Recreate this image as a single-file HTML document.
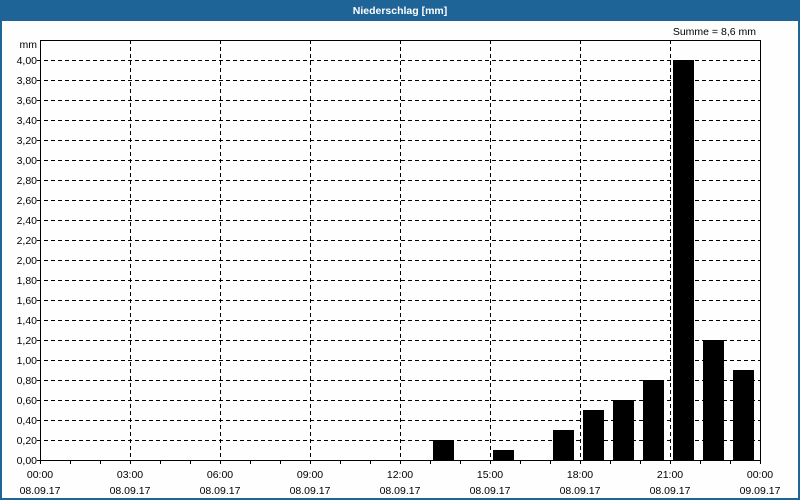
<!DOCTYPE html>
<html><head><meta charset="utf-8"><style>
html,body{margin:0;padding:0;width:800px;height:500px;overflow:hidden;background:#fff}
svg{display:block}
text{font-family:"Liberation Sans",sans-serif;font-size:10.5px;fill:#000}
</style></head><body>
<svg width="800" height="500" viewBox="0 0 800 500" xmlns="http://www.w3.org/2000/svg">
<rect x="0" y="0" width="800" height="500" fill="#1e6496"/>
<rect x="2" y="21" width="796" height="477" fill="#fdfefd"/>
<text x="400" y="14" text-anchor="middle" style="fill:#fff;font-weight:bold;font-size:10.5px">Niederschlag [mm]</text>
<text x="756" y="35" text-anchor="end">Summe = 8,6 mm</text>
<text x="37" y="48" text-anchor="end">mm</text>
<g stroke="#000" stroke-width="1" stroke-dasharray="4,3" shape-rendering="crispEdges">
<path d="M37 60.5H760M37 80.5H760M37 100.5H760M37 120.5H760M37 140.5H760M37 160.5H760M37 180.5H760M37 200.5H760M37 220.5H760M37 240.5H760M37 260.5H760M37 280.5H760M37 300.5H760M37 320.5H760M37 340.5H760M37 360.5H760M37 380.5H760M37 400.5H760M37 420.5H760M37 440.5H760"/>
<path d="M130.5 40V460M220.5 40V460M310.5 40V460M400.5 40V460M490.5 40V460M580.5 40V460M670.5 40V460"/>
</g>
<g fill="#000" shape-rendering="crispEdges">
<rect x="433" y="440" width="21" height="20"/>
<rect x="493" y="450" width="21" height="10"/>
<rect x="553" y="430" width="21" height="30"/>
<rect x="583" y="410" width="21" height="50"/>
<rect x="613" y="400" width="21" height="60"/>
<rect x="643" y="380" width="21" height="80"/>
<rect x="673" y="60" width="21" height="400"/>
<rect x="703" y="340" width="21" height="120"/>
<rect x="733" y="370" width="21" height="90"/>
</g>
<g stroke="#000" fill="none" shape-rendering="crispEdges">
<rect x="40.5" y="40.5" width="720" height="420"/>
<path d="M37 460.5H40M40.5 461V464M70.5 461V464M100.5 461V464M130.5 461V464M160.5 461V464M190.5 461V464M220.5 461V464M250.5 461V464M280.5 461V464M310.5 461V464M340.5 461V464M370.5 461V464M400.5 461V464M430.5 461V464M460.5 461V464M490.5 461V464M520.5 461V464M550.5 461V464M580.5 461V464M610.5 461V464M640.5 461V464M670.5 461V464M700.5 461V464M730.5 461V464M760.5 461V464"/>
</g>
<g text-anchor="end">
<text x="37" y="64">4,00</text><text x="37" y="84">3,80</text><text x="37" y="104">3,60</text><text x="37" y="124">3,40</text><text x="37" y="144">3,20</text><text x="37" y="164">3,00</text><text x="37" y="184">2,80</text><text x="37" y="204">2,60</text><text x="37" y="224">2,40</text><text x="37" y="244">2,20</text><text x="37" y="264">2,00</text><text x="37" y="284">1,80</text><text x="37" y="304">1,60</text><text x="37" y="324">1,40</text><text x="37" y="344">1,20</text><text x="37" y="364">1,00</text><text x="37" y="384">0,80</text><text x="37" y="404">0,60</text><text x="37" y="424">0,40</text><text x="37" y="444">0,20</text><text x="37" y="464">0,00</text>
</g>
<g text-anchor="middle">
<text x="40" y="478">00:00</text><text x="130" y="478">03:00</text><text x="220" y="478">06:00</text><text x="310" y="478">09:00</text><text x="400" y="478">12:00</text><text x="490" y="478">15:00</text><text x="580" y="478">18:00</text><text x="670" y="478">21:00</text><text x="760" y="478">00:00</text>
<text x="40" y="494">08.09.17</text><text x="130" y="494">08.09.17</text><text x="220" y="494">08.09.17</text><text x="310" y="494">08.09.17</text><text x="400" y="494">08.09.17</text><text x="490" y="494">08.09.17</text><text x="580" y="494">08.09.17</text><text x="670" y="494">08.09.17</text><text x="760" y="494">09.09.17</text>
</g>
</svg>
</body></html>
